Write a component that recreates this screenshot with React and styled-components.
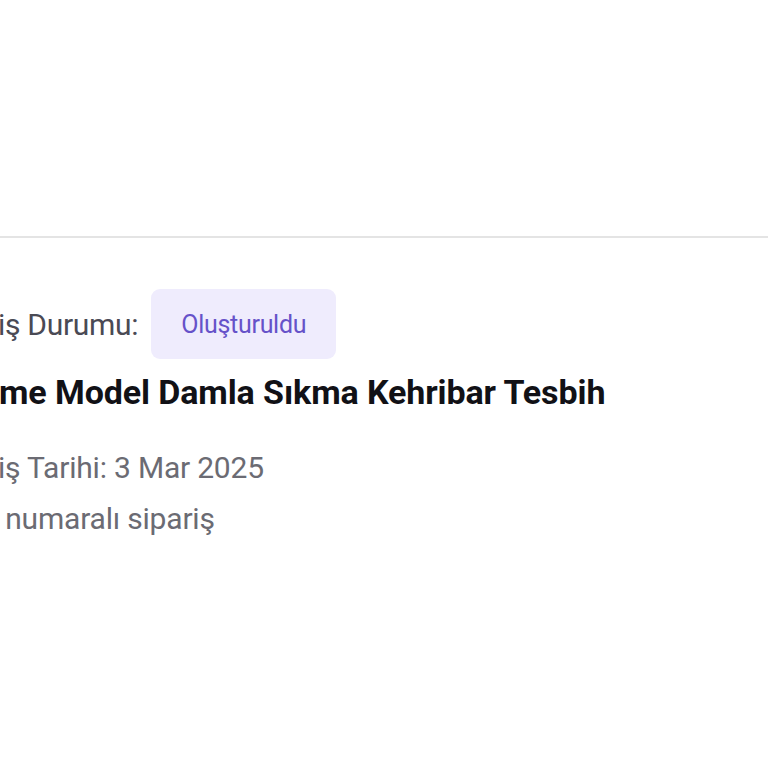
import React from "react"
import styled, { createGlobalStyle } from "styled-components"

const GlobalStyle = createGlobalStyle`
  html, body {
    margin: 0;
    padding: 0;
    background: #ffffff;
  }
  body {
    font-family: Roboto, "Liberation Sans", sans-serif;
  }
`

const Page = styled.div`
  width: 768px;
  height: 768px;
  overflow: hidden;
  background: #ffffff;
`

const TopSpace = styled.div`
  height: 236px;
  border-bottom: 2px solid #e4e4e4;
`

const Details = styled.section`
  display: flex;
  flex-direction: column;
  padding-top: 51px;
`

const StatusRow = styled.div`
  display: flex;
  align-items: center;
  gap: 13px;
`

const Label = styled.span`
  font-size: 30px;
  letter-spacing: -0.3px;
  color: #4a4a54;
  white-space: nowrap;
  margin-left: -2px;
`

const Badge = styled.span`
  display: inline-flex;
  align-items: center;
  justify-content: center;
  width: 185px;
  height: 70px;
  border-radius: 9px;
  background: #efecfd;
  color: #6652c9;
  font-size: 25px;
  letter-spacing: -0.3px;
`

const Title = styled.h1`
  margin: 13px 0 0 -1px;
  font-size: 34px;
  line-height: 40px;
  font-weight: 700;
  letter-spacing: -0.1px;
  color: #111116;
  white-space: nowrap;
`

const Meta = styled.p`
  margin: ${props => props.top || 0}px 0 0 -2px;
  font-size: 30px;
  line-height: 40px;
  letter-spacing: -0.2px;
  color: #6b6b73;
  white-space: nowrap;
`

const App = () => (
  <Page>
    <GlobalStyle />
    <TopSpace />
    <Details>
      <StatusRow>
        <Label>iş Durumu:</Label>
        <Badge>Oluşturuldu</Badge>
      </StatusRow>
      <Title>me Model Damla Sıkma Kehribar Tesbih</Title>
      <Meta top={36}>iş Tarihi: 3 Mar 2025</Meta>
      <Meta top={11}>&nbsp;numaralı sipariş</Meta>
    </Details>
  </Page>
)

export default App
